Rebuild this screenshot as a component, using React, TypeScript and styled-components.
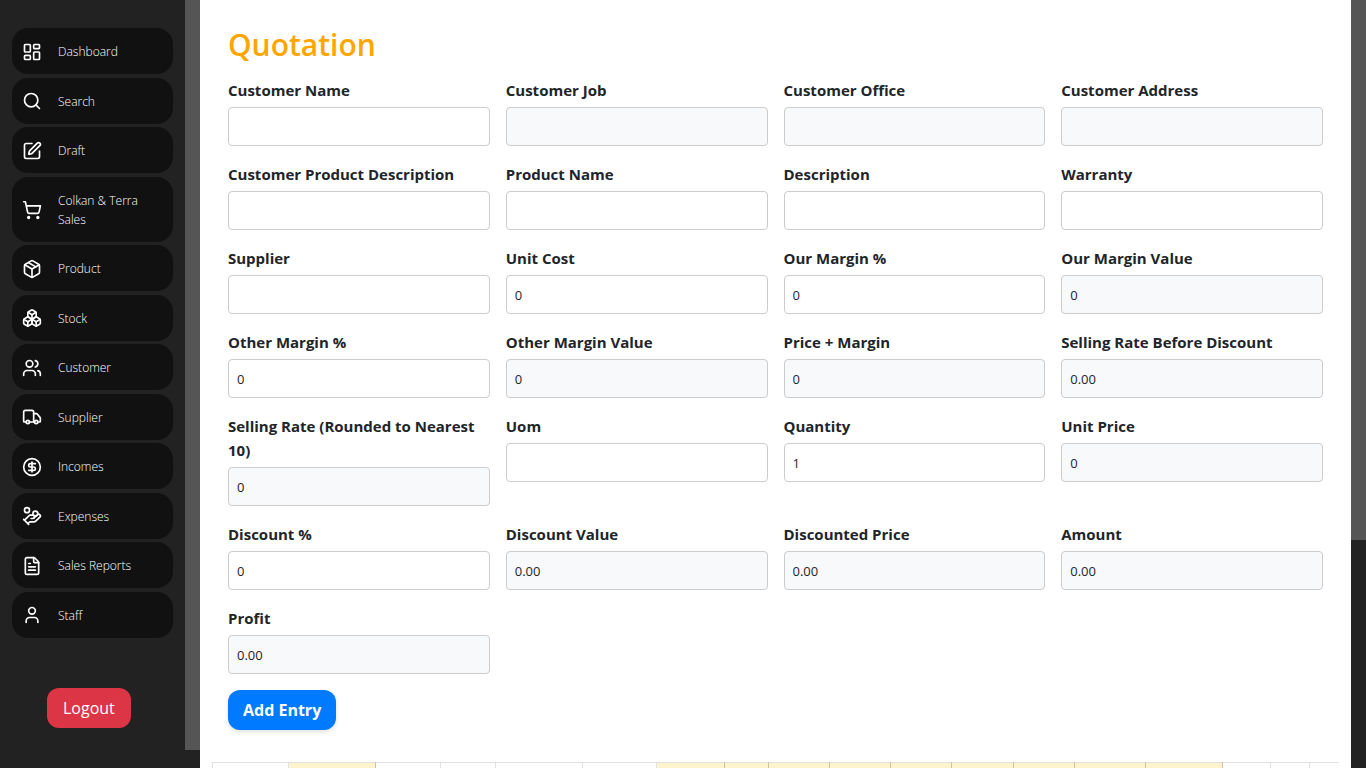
import React, { useId } from "react";
import styled, { createGlobalStyle } from "styled-components";
import {
  Boxes,
  CircleDollarSign,
  FileText,
  HandCoins,
  LayoutDashboard,
  Package,
  Search,
  ShoppingCart,
  SquarePen,
  Truck,
  User,
  Users,
  type LucideIcon,
} from "lucide-react";

const GlobalStyle = createGlobalStyle`
  *, *::before, *::after { box-sizing: border-box; }
  body {
    margin: 0;
    background: #222;
    color: #212529;
    font-family: "Segoe UI", "Open Sans", "Noto Sans", sans-serif;
    font-size: 15px;
    line-height: 24px;
  }
`;

const Shell = styled.div`
  display: flex;
  height: 100vh;
  overflow: hidden;
`;

const Sidebar = styled.aside`
  flex: 0 0 200px;
  display: flex;
  background: #222;
`;

const SidebarContent = styled.div`
  flex: 1;
  display: flex;
  flex-direction: column;
  padding: 28px 12px 0;
`;

const ScrollTrack = styled.div`
  flex: 0 0 15px;
  background: #222;
`;

const ScrollThumb = styled.div<{ $length: string }>`
  height: ${({ $length }) => $length};
  background: #555;
`;

const Nav = styled.nav`
  display: flex;
  flex-direction: column;
  justify-content: space-between;
  min-height: 610px;
`;

const NavLink = styled.a`
  display: flex;
  align-items: center;
  gap: 16px;
  padding: 14px 10px 13px;
  border-radius: 16px;
  background: #111;
  color: #fff;
  font-size: 12px;
  font-weight: 300;
  line-height: 19px;
  text-decoration: none;
  svg { flex: none; margin: -1px 0; }
`;

const SidebarFooter = styled.div`
  padding: 50px 0 0 35px;
`;

const LogoutButton = styled.button`
  display: block;
  height: 40px;
  padding: 0 16px;
  border: 0;
  border-radius: 12px;
  background: #dc3545;
  color: #fff;
  font: inherit;
  font-size: 16px;
`;

const Main = styled.main`
  flex: 1;
  min-width: 0;
  padding: 28px 12px 0;
  background: #fff;
  overflow: hidden;
`;

const FormArea = styled.form`
  padding: 0 16px;
`;

const Title = styled.h1`
  margin: 0 0 16px;
  color: orange;
  font-size: 30px;
  font-weight: 600;
  line-height: 34px;
`;

const FieldGrid = styled.div`
  display: grid;
  grid-template-columns: repeat(4, minmax(0, 1fr));
  gap: 16px;
  align-items: start;
`;

const FieldBox = styled.div`
  display: flex;
  flex-direction: column;
  gap: 5px;
`;

const Label = styled.label`
  font-weight: 700;
`;

const Input = styled.input`
  width: 100%;
  height: 39px;
  padding: 0 8px;
  border: 1px solid #ccc;
  border-radius: 4px;
  background: #fff;
  color: #212529;
  font: inherit;
  font-size: 13px;
  &:read-only { background: #f8f9fa; }
`;

const AddButton = styled.button`
  height: 40px;
  margin-top: 16px;
  padding: 0 15px;
  border: 0;
  border-radius: 12px;
  background: #007bff;
  box-shadow: 0 2px 4px rgba(0, 0, 0, 0.12);
  color: #fff;
  font: inherit;
  font-size: 16px;
  font-weight: 700;
`;

const TableWrap = styled.div`
  margin-top: 32px;
  overflow: hidden;
`;

const EntryTable = styled.table`
  width: 1200px;
  table-layout: fixed;
  border-collapse: collapse;
`;

const HeadCell = styled.th<{ $tinted: boolean }>`
  height: 40px;
  border: 1px solid #dee2e6;
  border-right-color: ${({ $tinted }) => ($tinted ? "#ccc1a1" : "#dee2e6")};
  background: ${({ $tinted }) => ($tinted ? "#fff3cd" : "#fff")};
`;

const navItems: { label: string; icon: LucideIcon }[] = [
  { label: "Dashboard", icon: LayoutDashboard },
  { label: "Search", icon: Search },
  { label: "Draft", icon: SquarePen },
  { label: "Colkan & Terra Sales", icon: ShoppingCart },
  { label: "Product", icon: Package },
  { label: "Stock", icon: Boxes },
  { label: "Customer", icon: Users },
  { label: "Supplier", icon: Truck },
  { label: "Incomes", icon: CircleDollarSign },
  { label: "Expenses", icon: HandCoins },
  { label: "Sales Reports", icon: FileText },
  { label: "Staff", icon: User },
];

type FieldProps = { label: string; value?: string; readOnly?: boolean };

const fields: FieldProps[] = [
  { label: "Customer Name" },
  { label: "Customer Job", readOnly: true },
  { label: "Customer Office", readOnly: true },
  { label: "Customer Address", readOnly: true },
  { label: "Customer Product Description" },
  { label: "Product Name" },
  { label: "Description" },
  { label: "Warranty" },
  { label: "Supplier" },
  { label: "Unit Cost", value: "0" },
  { label: "Our Margin %", value: "0" },
  { label: "Our Margin Value", value: "0", readOnly: true },
  { label: "Other Margin %", value: "0" },
  { label: "Other Margin Value", value: "0", readOnly: true },
  { label: "Price + Margin", value: "0", readOnly: true },
  { label: "Selling Rate Before Discount", value: "0.00", readOnly: true },
  { label: "Selling Rate (Rounded to Nearest 10)", value: "0", readOnly: true },
  { label: "Uom" },
  { label: "Quantity", value: "1" },
  { label: "Unit Price", value: "0", readOnly: true },
  { label: "Discount %", value: "0" },
  { label: "Discount Value", value: "0.00", readOnly: true },
  { label: "Discounted Price", value: "0.00", readOnly: true },
  { label: "Amount", value: "0.00", readOnly: true },
  { label: "Profit", value: "0.00", readOnly: true },
];

const columns = [
  { width: 76 },
  { width: 87, tinted: true },
  { width: 65 },
  { width: 55 },
  { width: 87 },
  { width: 74 },
  { width: 68, tinted: true },
  { width: 44, tinted: true },
  { width: 61, tinted: true },
  { width: 61, tinted: true },
  { width: 61, tinted: true },
  { width: 62, tinted: true },
  { width: 61, tinted: true },
  { width: 71, tinted: true },
  { width: 77, tinted: true },
  { width: 48 },
  { width: 39 },
  { width: 103 },
];

function Field({ label, value = "", readOnly = false }: FieldProps) {
  const id = useId();
  return (
    <FieldBox>
      <Label htmlFor={id}>{label}</Label>
      <Input id={id} defaultValue={value} readOnly={readOnly} />
    </FieldBox>
  );
}

export default function App() {
  return (
    <Shell>
      <GlobalStyle />
      <Sidebar>
        <SidebarContent>
          <Nav>
            {navItems.map(({ label, icon: Icon }) => (
              <NavLink key={label} href="#">
                <Icon size={20} />
                {label}
              </NavLink>
            ))}
          </Nav>
          <SidebarFooter>
            <LogoutButton type="button">Logout</LogoutButton>
          </SidebarFooter>
        </SidebarContent>
        <ScrollTrack>
          <ScrollThumb $length="750px" />
        </ScrollTrack>
      </Sidebar>
      <Main>
        <FormArea>
          <Title>Quotation</Title>
          <FieldGrid>
            {fields.map((field) => (
              <Field key={field.label} {...field} />
            ))}
          </FieldGrid>
          <AddButton type="button">Add Entry</AddButton>
        </FormArea>
        <TableWrap>
          <EntryTable>
            <colgroup>
              {columns.map(({ width }, index) => (
                <col key={index} width={width} />
              ))}
            </colgroup>
            <thead>
              <tr>
                {columns.map(({ tinted = false }, index) => (
                  <HeadCell key={index} scope="col" $tinted={tinted} />
                ))}
              </tr>
            </thead>
          </EntryTable>
        </TableWrap>
      </Main>
      <ScrollTrack>
        <ScrollThumb $length="540px" />
      </ScrollTrack>
    </Shell>
  );
}
